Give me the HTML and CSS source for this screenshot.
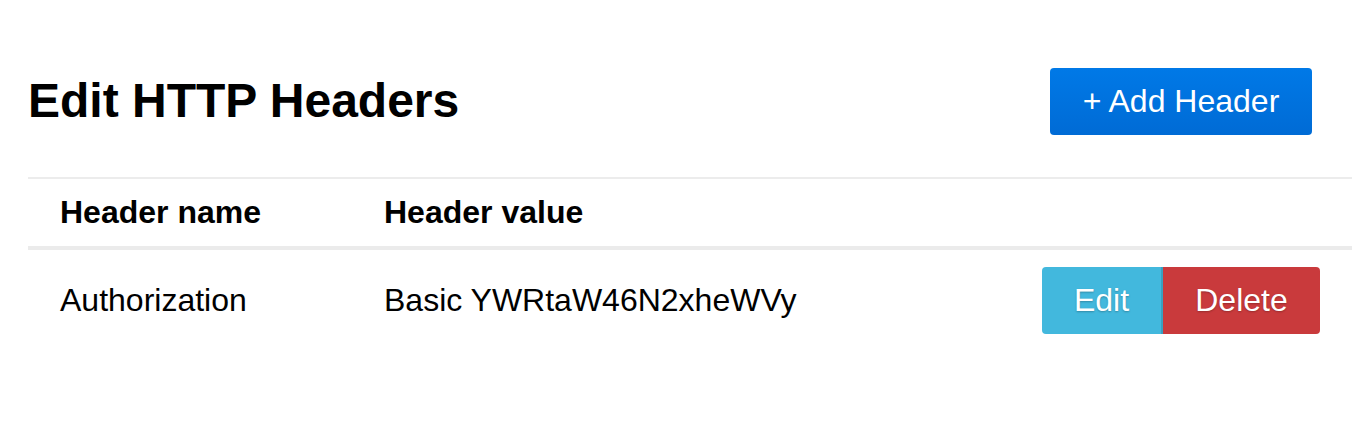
FILE: index.html
```html
<!DOCTYPE html>
<html>
<head>
<meta charset="utf-8">
<link rel="stylesheet" href="styles.css">
</head>
<body>
<div class="page">
  <div class="topbar">
    <h1 class="title">Edit HTTP Headers</h1>
    <button class="btn btn-primary">+ Add Header</button>
  </div>
  <div class="table">
    <div class="row head">
      <div class="cell c1">Header name</div>
      <div class="cell c2">Header value</div>
      <div class="cell c3"></div>
    </div>
    <div class="row body">
      <div class="cell c1">Authorization</div>
      <div class="cell c2">Basic YWRtaW46N2xheWVy</div>
      <div class="cell c3">
        <div class="btn-group">
          <button class="btn btn-info">Edit</button>
          <button class="btn btn-danger">Delete</button>
        </div>
      </div>
    </div>
  </div>
</div>
</body>
</html>
```

FILE: styles.css
```css
html, body {
  margin: 0;
  padding: 0;
  background: #fff;
}
body {
  font-family: "Liberation Sans", Arial, sans-serif;
  font-size: 32px;
  color: #000;
  overflow: hidden;
}
.page {
  padding: 68px 0 0 28px;
}
.topbar {
  display: flex;
  align-items: flex-start;
  justify-content: space-between;
  padding-right: 40px;
  height: 108px;
}
.title {
  margin: 0;
  font-size: 48px;
  font-weight: bold;
  line-height: 66px;
}
.btn {
  font-family: "Liberation Sans", Arial, sans-serif;
  font-size: 32px;
  color: #fff;
  border: none;
  cursor: pointer;
  height: 67px;
  padding: 0;
}
.btn-primary {
  width: 262px;
  border-radius: 4px;
  background: linear-gradient(#0079e7, #006bd5);
}
.table {
  border-top: 2px solid #ececec;
  margin-top: 1px;
}
.row {
  display: flex;
  align-items: center;
}
.row.head {
  height: 67px;
  font-weight: bold;
  border-bottom: 4px solid #ebebeb;
}
.row.body {
  height: 100px;
}
.cell {
  padding-left: 32px;
  box-sizing: border-box;
}
.c1 { width: 324px; }
.c2 { flex: 1; }
.c3 {
  padding: 0 32px 0 0;
  display: flex;
  justify-content: flex-end;
}
.btn-group {
  display: flex;
}
.btn-info {
  width: 121px;
  background: #42b8dd;
  border-radius: 4px 0 0 4px;
  border-right: 2px solid #3a9fbf;
  text-shadow: 0 1px 2px rgba(0,0,0,0.25);
}
.btn-danger {
  width: 157px;
  background: #c93a3c;
  border-radius: 0 4px 4px 0;
  text-shadow: 0 1px 2px rgba(0,0,0,0.25);
}
```
